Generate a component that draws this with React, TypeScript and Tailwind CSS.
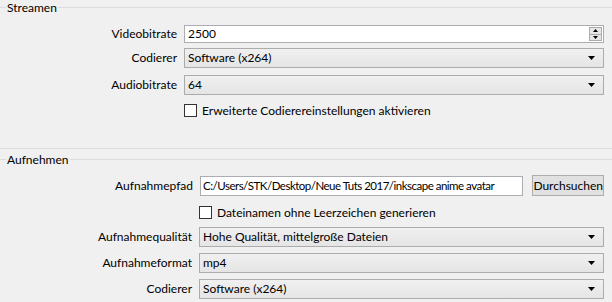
import React from 'react';

const font = { fontFamily: 'Lato, "Liberation Sans", sans-serif' };

const Arrow = () => (
  <svg width="7" height="4" viewBox="0 0 7 4" className="block">
    <path d="M0 0 H7 L3.5 4 Z" fill="#000" />
  </svg>
);

const Combo = ({ value }: { value: string }) => (
  <div className="flex h-[20px] flex-1 items-center justify-between border border-[#acacac] bg-gradient-to-b from-[#f0f0f0] to-[#e5e5e5] pl-[3px] pr-[8px]">
    <span className="whitespace-nowrap leading-none">{value}</span>
    <Arrow />
  </div>
);

const SpinBox = ({ value }: { value: string }) => (
  <div className="flex h-[18px] flex-1 items-center justify-between border border-[#abadb3] bg-white pl-[3px] pr-[1px]">
    <span className="leading-none">{value}</span>
    <div className="flex h-[14px] w-[13px] flex-col border border-[#acacac] bg-[#e6e6e6]">
      <div className="flex flex-1 items-center justify-center border-b border-[#acacac]">
        <svg width="5" height="3" viewBox="0 0 5 3"><path d="M0 3 H5 L2.5 0 Z" fill="#000" /></svg>
      </div>
      <div className="flex flex-1 items-center justify-center">
        <svg width="5" height="3" viewBox="0 0 5 3"><path d="M0 0 H5 L2.5 3 Z" fill="#000" /></svg>
      </div>
    </div>
  </div>
);

const Check = ({ label }: { label: string }) => (
  <div className="flex items-center gap-[5px]">
    <div className="h-[13px] w-[13px] border border-[#333] bg-white" />
    <span className="whitespace-nowrap leading-none">{label}</span>
  </div>
);

const GroupTitle = ({ title }: { title: string }) => (
  <div className="flex h-[15px] items-center">
    <div className="h-px w-[6px] bg-[#dcdcdc]" />
    <span className="px-[1px] leading-none">{title}</span>
    <div className="h-px flex-1 bg-[#dcdcdc]" />
  </div>
);

const Row = ({ label, labelW, children, className = '' }: { label: string; labelW: string; children: React.ReactNode; className?: string }) => (
  <div className={`flex items-center ${className}`}>
    <div className={`${labelW} shrink-0 whitespace-nowrap pr-[7px] text-right leading-none`}>{label}</div>
    {children}
  </div>
);

export default function App() {
  return (
    <div className="h-[302px] w-[612px] overflow-hidden bg-[#f0f0f0] text-[12px] text-black" style={font}>
      <GroupTitle title="Streamen" />
      <div className="flex flex-col pr-[8px]">
        <Row label="Videobitrate" labelW="w-[184px]" className="mt-[10px]">
          <SpinBox value="2500" />
        </Row>
        <Row label="Codierer" labelW="w-[184px]" className="mt-[5px]">
          <Combo value="Software (x264)" />
        </Row>
        <Row label="Audiobitrate" labelW="w-[184px]" className="mt-[7px]">
          <Combo value="64" />
        </Row>
        <div className="mt-[9px] pl-[184px]">
          <Check label="Erweiterte Codierereinstellungen aktivieren" />
        </div>
      </div>
      <div className="mt-[31px] h-px bg-[#dcdcdc]" />

      <div className="mt-[3px]">
        <GroupTitle title="Aufnehmen" />
      </div>
      <div className="flex flex-col pr-[8px]">
        <Row label="Aufnahmepfad" labelW="w-[200px]" className="mt-[8px]">
          <div className="flex h-[20px] w-[325px] items-center overflow-hidden border border-[#abadb3] bg-white pl-[2px]">
            <span className="whitespace-nowrap text-[11.5px] leading-none tracking-[-0.5px]">C:/Users/STK/Desktop/Neue Tuts 2017/inkscape anime avatar</span>
          </div>
          <div className="ml-[9px] flex h-[21px] flex-1 items-center justify-center border border-[#adadad] bg-[#e1e1e1]">
            <span className="leading-none">Durchsuchen</span>
          </div>
        </Row>
        <div className="mt-[10px] pl-[199px]">
          <Check label="Dateinamen ohne Leerzeichen generieren" />
        </div>
        <Row label="Aufnahmequalität" labelW="w-[199px]" className="mt-[8px]">
          <Combo value="Hohe Qualität, mittelgroße Dateien" />
        </Row>
        <Row label="Aufnahmeformat" labelW="w-[199px]" className="mt-[6px]">
          <Combo value="mp4" />
        </Row>
        <Row label="Codierer" labelW="w-[199px]" className="mt-[6px]">
          <Combo value="Software (x264)" />
        </Row>
      </div>
    </div>
  );
}
